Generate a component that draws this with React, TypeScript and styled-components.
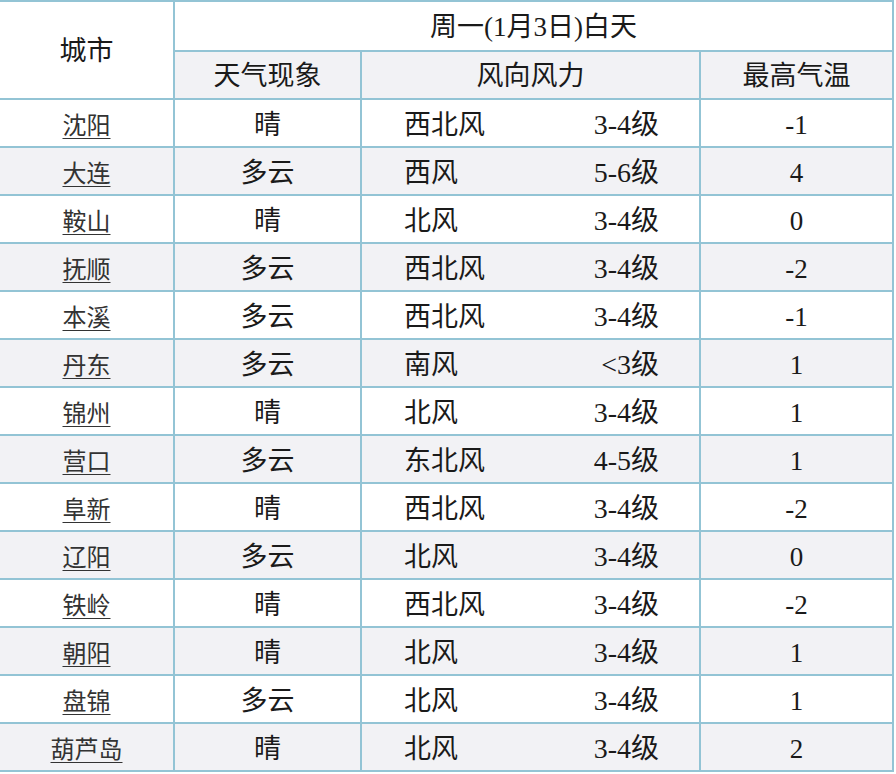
import React from "react";
import styled, { createGlobalStyle } from "styled-components";

const GlobalStyle = createGlobalStyle`
  html, body {
    margin: 0;
    padding: 0;
    background: #ffffff;
  }
  body {
    font-family: "Liberation Serif", "Noto Sans CJK SC", serif;
    color: #1a1a1a;
  }
`;

const BORDER = "#93c4d5";
const STRIPE = "#f2f2f5";

const Table = styled.table`
  border-collapse: separate;
  border-spacing: 0;
  table-layout: fixed;
  width: 894px;
  border-top: 2px solid ${BORDER};
  font-size: 27px;
`;

const Row = styled.tr<{ $stripe?: boolean; $tall?: boolean }>`
  background: ${(p) => (p.$stripe ? STRIPE : "#ffffff")};
  height: ${(p) => (p.$tall ? "50px" : "48px")};
`;

const Cell = styled.td`
  box-sizing: border-box;
  padding: 4px 0 0;
  text-align: center;
  vertical-align: middle;
  border-right: 2px solid ${BORDER};
  border-bottom: 2px solid ${BORDER};
  line-height: 1;
  white-space: nowrap;
`;

const HeadCell = styled(Cell).attrs({ as: "th" })`
  font-weight: normal;
  padding: 3px 0 0;
`;

const CityLink = styled.a`
  color: #333333;
  text-decoration: underline;
  text-underline-offset: 4px;
  text-decoration-thickness: 1px;
  font-size: 24px;
`;

const Wind = styled.div`
  display: flex;
  justify-content: space-between;
  align-items: center;
  padding: 0 40px 0 42px;
`;

const Level = styled.span`
  font-size: 28px;
`;

type Item = { city: string; weather: string; dir: string; level: string; temp: string };

const data: Item[] = [
  { city: "沈阳", weather: "晴", dir: "西北风", level: "3-4级", temp: "-1" },
  { city: "大连", weather: "多云", dir: "西风", level: "5-6级", temp: "4" },
  { city: "鞍山", weather: "晴", dir: "北风", level: "3-4级", temp: "0" },
  { city: "抚顺", weather: "多云", dir: "西北风", level: "3-4级", temp: "-2" },
  { city: "本溪", weather: "多云", dir: "西北风", level: "3-4级", temp: "-1" },
  { city: "丹东", weather: "多云", dir: "南风", level: "<3级", temp: "1" },
  { city: "锦州", weather: "晴", dir: "北风", level: "3-4级", temp: "1" },
  { city: "营口", weather: "多云", dir: "东北风", level: "4-5级", temp: "1" },
  { city: "阜新", weather: "晴", dir: "西北风", level: "3-4级", temp: "-2" },
  { city: "辽阳", weather: "多云", dir: "北风", level: "3-4级", temp: "0" },
  { city: "铁岭", weather: "晴", dir: "西北风", level: "3-4级", temp: "-2" },
  { city: "朝阳", weather: "晴", dir: "北风", level: "3-4级", temp: "1" },
  { city: "盘锦", weather: "多云", dir: "北风", level: "3-4级", temp: "1" },
  { city: "葫芦岛", weather: "晴", dir: "北风", level: "3-4级", temp: "2" },
];

export default function App() {
  return (
    <>
      <GlobalStyle />
      <Table>
        <colgroup>
          <col style={{ width: 175 }} />
          <col style={{ width: 187 }} />
          <col style={{ width: 339 }} />
          <col style={{ width: 193 }} />
        </colgroup>
        <thead>
          <Row $tall>
            <HeadCell rowSpan={2}>城市</HeadCell>
            <HeadCell colSpan={3}>周一(1月3日)白天</HeadCell>
          </Row>
          <Row $stripe>
            <HeadCell>天气现象</HeadCell>
            <HeadCell>风向风力</HeadCell>
            <HeadCell>最高气温</HeadCell>
          </Row>
        </thead>
        <tbody>
          {data.map((d, i) => (
            <Row key={d.city} $stripe={i % 2 === 1}>
              <Cell>
                <CityLink href="#">{d.city}</CityLink>
              </Cell>
              <Cell>{d.weather}</Cell>
              <Cell>
                <Wind>
                  <span>{d.dir}</span>
                  <Level>{d.level}</Level>
                </Wind>
              </Cell>
              <Cell>{d.temp}</Cell>
            </Row>
          ))}
        </tbody>
      </Table>
    </>
  );
}
